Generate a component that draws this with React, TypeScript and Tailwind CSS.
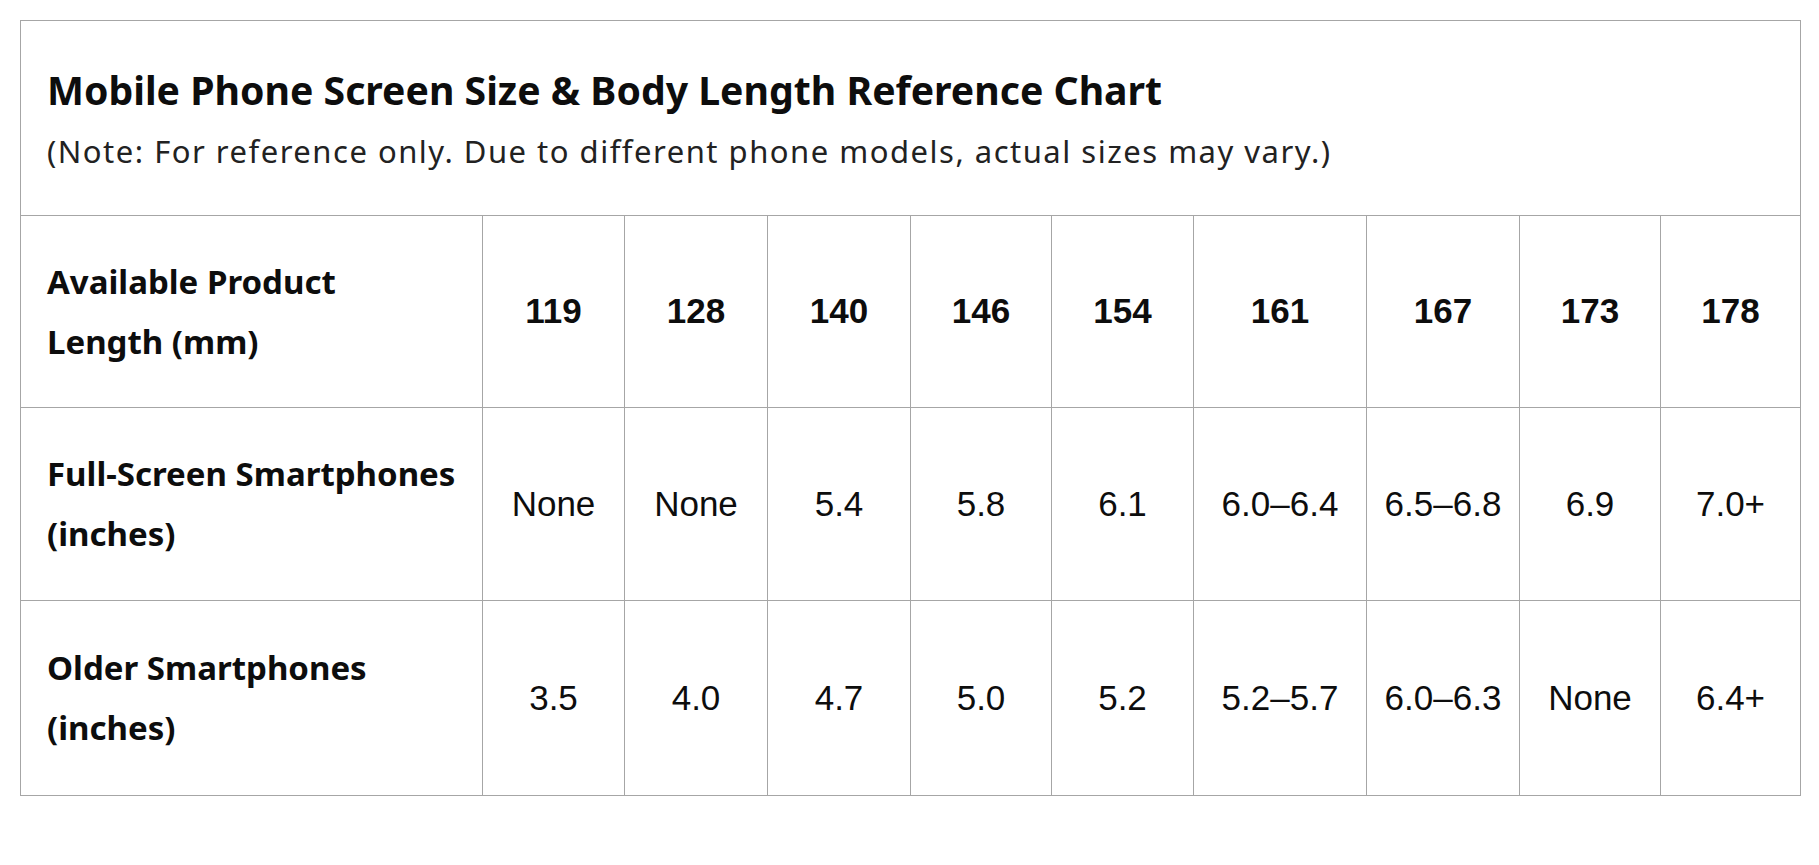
const widths = [
  'w-[462px]',
  'w-[142px]',
  'w-[143px]',
  'w-[143px]',
  'w-[141px]',
  'w-[142px]',
  'w-[173px]',
  'w-[153px]',
  'w-[141px]',
  'w-[139px]',
]

const rows = [
  {
    label: ['Available Product', 'Length (mm)'],
    values: ['119', '128', '140', '146', '154', '161', '167', '173', '178'],
    head: true,
    h: 'h-[192px]',
  },
  {
    label: ['Full-Screen Smartphones', '(inches)'],
    values: ['None', 'None', '5.4', '5.8', '6.1', '6.0–6.4', '6.5–6.8', '6.9', '7.0+'],
    h: 'h-[193px]',
  },
  {
    label: ['Older Smartphones', '(inches)'],
    values: ['3.5', '4.0', '4.7', '5.0', '5.2', '5.2–5.7', '6.0–6.3', 'None', '6.4+'],
    h: 'h-[194px]',
    last: true,
  },
]

export default function App() {
  return (
    <main className="min-h-[865px] w-full bg-white pt-[20px] pl-[20px] text-[#0d0d0d]">
      <div className="w-[1781px] border border-[#a6a6a6]">
        <div className="h-[195px] border-b border-[#a6a6a6] pt-[45px] pl-[26px] font-['Noto_Sans',sans-serif]">
          <h1 className="text-[39.2px] leading-[48px] font-bold">
            Mobile Phone Screen Size &amp; Body Length Reference Chart
          </h1>
          <p className="mt-[19px] text-[31px] leading-[36px] tracking-[1.5px] text-[#222]">
            (Note: For reference only. Due to different phone models, actual sizes may vary.)
          </p>
        </div>

        {rows.map((row) => (
          <div
            key={row.label[0]}
            className={`flex ${row.h} ${row.last ? '' : 'border-b border-[#a6a6a6]'}`}
          >
            <div
              className={`${widths[0]} flex shrink-0 flex-col justify-center border-r border-[#a6a6a6] pl-[26px] font-['Noto_Sans',sans-serif] text-[33px] leading-[60px] font-bold`}
            >
              <span>{row.label[0]}</span>
              <span>{row.label[1]}</span>
            </div>
            {row.values.map((v, i) => (
              <div
                key={i}
                className={`${widths[i + 1]} flex shrink-0 items-center justify-center font-['Liberation_Sans',Arial,sans-serif] ${
                  i < row.values.length - 1 ? 'border-r border-[#a6a6a6]' : ''
                } ${row.head ? 'text-[35px] font-bold' : 'text-[35px]'}`}
              >
                {v}
              </div>
            ))}
          </div>
        ))}
      </div>
    </main>
  )
}
